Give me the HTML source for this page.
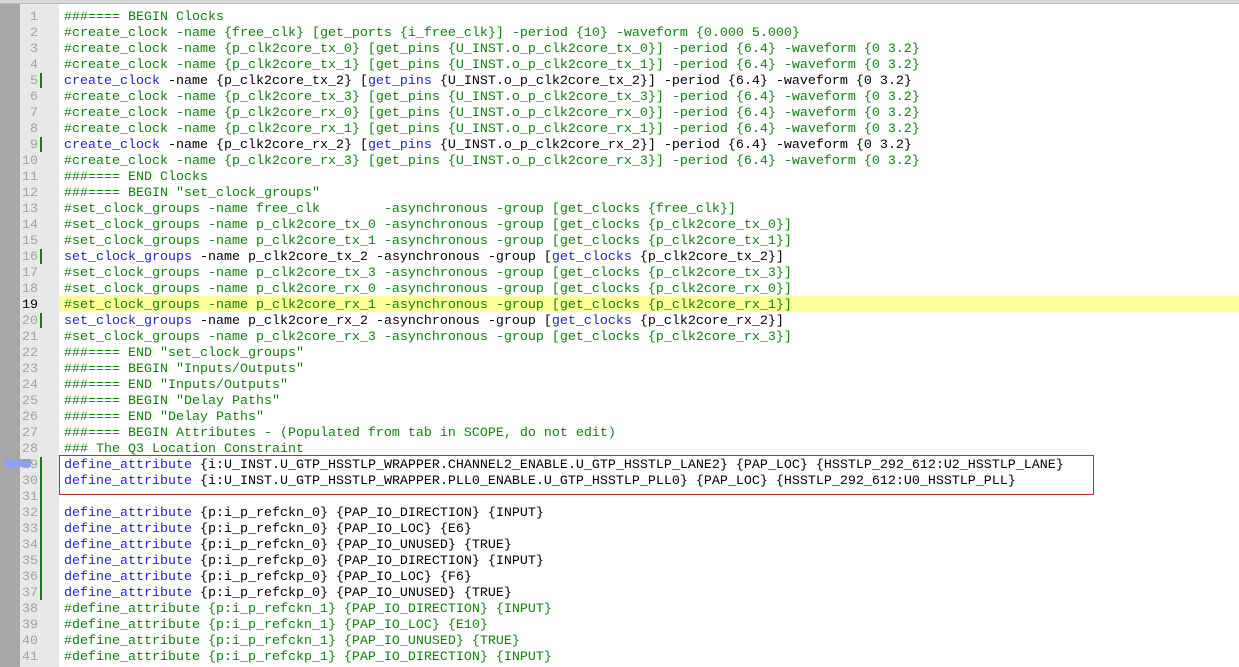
<!DOCTYPE html>
<html><head><meta charset="utf-8"><style>
html,body{margin:0;padding:0;width:1239px;height:667px;overflow:hidden;background:#fff;}
#top{position:absolute;left:0;top:0;width:1239px;height:3px;background:#d8d8d8;border-bottom:1px solid #b8b8b8;}
#g1{position:absolute;left:0;top:4px;width:20px;height:663px;background:#a8a8a8;}
#g2{position:absolute;left:20px;top:4px;width:39px;height:663px;background:#e8e8e8;}
.ln{position:absolute;left:20px;width:18px;text-align:right;font:13.33px "Liberation Mono",monospace;color:#a0a0a0;height:16px;line-height:16px;}
.l{position:absolute;left:64px;font:13.33px "Liberation Mono",monospace;white-space:pre;height:16px;line-height:16px;color:#000;}
.c{color:#108010}.k{color:#2323c8}
.m{position:absolute;left:40px;width:2px;background:#108010;}
</style></head><body>
<div id="top"></div><div id="g1"></div><div id="g2"></div>
<div style="position:absolute;left:59px;top:296px;width:1180px;height:16px;background:#ffff99"></div>
<div style="position:absolute;left:59px;top:455px;width:1033px;height:38px;border:1px solid #b83030"></div>
<div style="position:absolute;left:5px;top:459px;width:26px;height:8px;background:#8ea0f0"></div>
<div class="m" style="top:73px;height:15px"></div>
<div class="m" style="top:137px;height:15px"></div>
<div class="m" style="top:249px;height:15px"></div>
<div class="m" style="top:313px;height:15px"></div>
<div class="m" style="top:457px;height:143px"></div>
<div id="c"></div>
<script>
var L=[
["c","###==== BEGIN Clocks"],
["c","#create_clock -name {free_clk} [get_ports {i_free_clk}] -period {10} -waveform {0.000 5.000}"],
["c","#create_clock -name {p_clk2core_tx_0} [get_pins {U_INST.o_p_clk2core_tx_0}] -period {6.4} -waveform {0 3.2}"],
["c","#create_clock -name {p_clk2core_tx_1} [get_pins {U_INST.o_p_clk2core_tx_1}] -period {6.4} -waveform {0 3.2}"],
["h",'<span class="k">create_clock</span> -name {p_clk2core_tx_2} [<span class="k">get_pins</span> {U_INST.o_p_clk2core_tx_2}] -period {6.4} -waveform {0 3.2}'],
["c","#create_clock -name {p_clk2core_tx_3} [get_pins {U_INST.o_p_clk2core_tx_3}] -period {6.4} -waveform {0 3.2}"],
["c","#create_clock -name {p_clk2core_rx_0} [get_pins {U_INST.o_p_clk2core_rx_0}] -period {6.4} -waveform {0 3.2}"],
["c","#create_clock -name {p_clk2core_rx_1} [get_pins {U_INST.o_p_clk2core_rx_1}] -period {6.4} -waveform {0 3.2}"],
["h",'<span class="k">create_clock</span> -name {p_clk2core_rx_2} [<span class="k">get_pins</span> {U_INST.o_p_clk2core_rx_2}] -period {6.4} -waveform {0 3.2}'],
["c","#create_clock -name {p_clk2core_rx_3} [get_pins {U_INST.o_p_clk2core_rx_3}] -period {6.4} -waveform {0 3.2}"],
["c","###==== END Clocks"],
["c",'###==== BEGIN "set_clock_groups"'],
["c","#set_clock_groups -name free_clk        -asynchronous -group [get_clocks {free_clk}]"],
["c","#set_clock_groups -name p_clk2core_tx_0 -asynchronous -group [get_clocks {p_clk2core_tx_0}]"],
["c","#set_clock_groups -name p_clk2core_tx_1 -asynchronous -group [get_clocks {p_clk2core_tx_1}]"],
["h",'<span class="k">set_clock_groups</span> -name p_clk2core_tx_2 -asynchronous -group [<span class="k">get_clocks</span> {p_clk2core_tx_2}]'],
["c","#set_clock_groups -name p_clk2core_tx_3 -asynchronous -group [get_clocks {p_clk2core_tx_3}]"],
["c","#set_clock_groups -name p_clk2core_rx_0 -asynchronous -group [get_clocks {p_clk2core_rx_0}]"],
["c","#set_clock_groups -name p_clk2core_rx_1 -asynchronous -group [get_clocks {p_clk2core_rx_1}]"],
["h",'<span class="k">set_clock_groups</span> -name p_clk2core_rx_2 -asynchronous -group [<span class="k">get_clocks</span> {p_clk2core_rx_2}]'],
["c","#set_clock_groups -name p_clk2core_rx_3 -asynchronous -group [get_clocks {p_clk2core_rx_3}]"],
["c",'###==== END "set_clock_groups"'],
["c",'###==== BEGIN "Inputs/Outputs"'],
["c",'###==== END "Inputs/Outputs"'],
["c",'###==== BEGIN "Delay Paths"'],
["c",'###==== END "Delay Paths"'],
["c","###==== BEGIN Attributes - (Populated from tab in SCOPE, do not edit)"],
["c","### The Q3 Location Constraint"],
["h",'<span class="k">define_attribute</span> {i:U_INST.U_GTP_HSSTLP_WRAPPER.CHANNEL2_ENABLE.U_GTP_HSSTLP_LANE2} {PAP_LOC} {HSSTLP_292_612:U2_HSSTLP_LANE}'],
["h",'<span class="k">define_attribute</span> {i:U_INST.U_GTP_HSSTLP_WRAPPER.PLL0_ENABLE.U_GTP_HSSTLP_PLL0} {PAP_LOC} {HSSTLP_292_612:U0_HSSTLP_PLL}'],
["h",""],
["h",'<span class="k">define_attribute</span> {p:i_p_refckn_0} {PAP_IO_DIRECTION} {INPUT}'],
["h",'<span class="k">define_attribute</span> {p:i_p_refckn_0} {PAP_IO_LOC} {E6}'],
["h",'<span class="k">define_attribute</span> {p:i_p_refckn_0} {PAP_IO_UNUSED} {TRUE}'],
["h",'<span class="k">define_attribute</span> {p:i_p_refckp_0} {PAP_IO_DIRECTION} {INPUT}'],
["h",'<span class="k">define_attribute</span> {p:i_p_refckp_0} {PAP_IO_LOC} {F6}'],
["h",'<span class="k">define_attribute</span> {p:i_p_refckp_0} {PAP_IO_UNUSED} {TRUE}'],
["c","#define_attribute {p:i_p_refckn_1} {PAP_IO_DIRECTION} {INPUT}"],
["c","#define_attribute {p:i_p_refckn_1} {PAP_IO_LOC} {E10}"],
["c","#define_attribute {p:i_p_refckn_1} {PAP_IO_UNUSED} {TRUE}"],
["c","#define_attribute {p:i_p_refckp_1} {PAP_IO_DIRECTION} {INPUT}"]
];
var h="";
for(var i=0;i<L.length;i++){var t=10+16*i;
h+='<div class="ln" style="top:'+t+'px'+(i==18?';color:#000':'')+'">'+(i+1)+'</div>';
if(L[i][0]=="c"){var s=L[i][1].replace(/&/g,"&amp;").replace(/</g,"&lt;");h+='<div class="l c" style="top:'+t+'px">'+s+'</div>';}
else h+='<div class="l" style="top:'+t+'px">'+L[i][1]+'</div>';}
document.getElementById("c").innerHTML=h;
</script>
</body></html>
